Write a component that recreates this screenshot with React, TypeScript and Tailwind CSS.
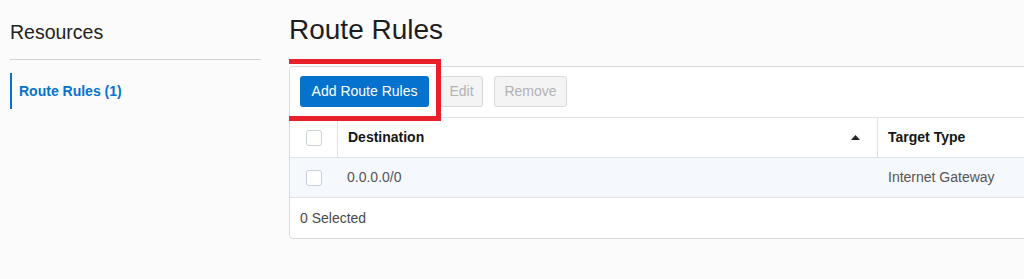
import React from "react";

function Checkbox() {
  return <span className="block h-4 w-4 rounded-[3px] border-[1.5px] border-[#c9d0d6] bg-white" />;
}

export default function App() {
  return (
    <div
      className="flex h-[279px] w-[1024px] overflow-hidden bg-[#fbfbfb] text-[14px]"
      style={{ fontFamily: '"Liberation Sans", Arial, sans-serif' }}
    >
      {/* sidebar */}
      <aside className="w-[261px] shrink-0 pl-[10px] pt-[20px]">
        <h2 className="text-[19.5px] leading-[24px] text-[#222]">Resources</h2>
        <div className="mt-[15px] h-px bg-[#cfd3d7]" />
        <nav className="mt-[13px]">
          <a className="flex h-[36px] items-center border-l-[2px] border-[#0572ce] pl-[7px] pt-[1px] font-bold text-[#0572ce]">
            Route Rules (1)
          </a>
        </nav>
      </aside>

      {/* main */}
      <main className="ml-[28px] flex-1 overflow-hidden pt-[14px]">
        <h1 className="text-[28px] leading-[32px] text-[#1d1d1d]">Route Rules</h1>

        <div className="relative mt-[20px] w-[800px] rounded-[4px] border border-[#d6dbe0] bg-white">
          <div className="flex items-center gap-[11px] border-b border-[#dfe3e7] pl-[10px] pb-[10px] pt-[9px]">
            <button className="flex h-[31px] w-[129px] items-center justify-center rounded-[3px] bg-[#0572ce] text-white">
              Add Route Rules
            </button>
            <button className="flex h-[31px] w-[43px] items-center justify-center rounded-[3px] border border-[#d8d8d8] bg-[#f4f4f4] text-[#b2b2b2]">
              Edit
            </button>
            <button className="flex h-[31px] w-[73px] items-center justify-center rounded-[3px] border border-[#d8d8d8] bg-[#f4f4f4] text-[#b2b2b2]">
              Remove
            </button>
          </div>

          {/* header */}
          <div className="flex h-[40px] border-b border-[#dfe3e7]">
            <div className="flex w-[48px] items-center justify-center border-r border-[#dfe3e7]">
              <Checkbox />
            </div>
            <div className="flex w-[540px] items-center justify-between border-r border-[#dfe3e7] pl-[10px] pr-[17px] font-bold text-[#161513]">
              Destination
              <svg width="9" height="5" viewBox="0 0 9 5">
                <path d="M0 5 L4.5 0 L9 5 Z" fill="#222" />
              </svg>
            </div>
            <div className="flex items-center pl-[10px] font-bold text-[#161513]">Target Type</div>
          </div>

          {/* row */}
          <div className="flex h-[40px] border-b border-[#dfe3e7] bg-[#f5f8fc] text-[#555]">
            <div className="flex w-[48px] items-center justify-center">
              <Checkbox />
            </div>
            <div className="flex w-[540px] items-center pl-[9px]">0.0.0.0/0</div>
            <div className="flex items-center pl-[10px]">Internet Gateway</div>
          </div>

          {/* footer */}
          <div className="flex h-[40px] items-center pl-[10px] text-[#4a4a4a]">0 Selected</div>

          {/* annotation */}
          <div className="pointer-events-none absolute left-[-7px] top-[-8px] h-[62px] w-[158px] border-[5px] border-[#e8202a]" />
        </div>
      </main>
    </div>
  );
}
